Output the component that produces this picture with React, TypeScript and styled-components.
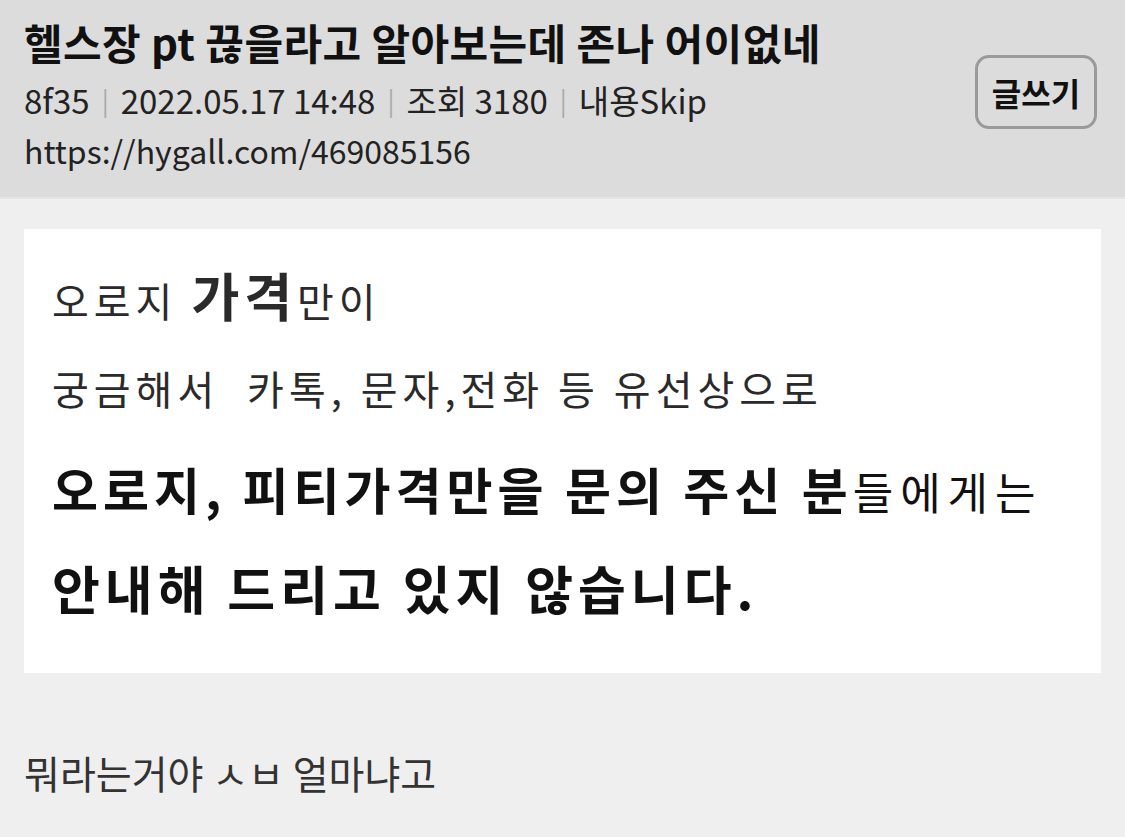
import React from "react";
import styled, { createGlobalStyle } from "styled-components";

const GlobalStyle = createGlobalStyle`
  html, body {
    margin: 0;
    padding: 0;
    background: #efefef;
    font-family: "Noto Sans CJK KR", "Noto Sans", sans-serif;
  }
`;

const Page = styled.div`
  width: 1125px;
  min-height: 837px;
  background: #efefef;
`;

const Header = styled.header`
  display: flex;
  justify-content: space-between;
  align-items: flex-start;
  padding: 14px 28px 27px 24px;
  background: #dcdcdc;
  border-bottom: 2px solid #e4e4e4;
`;

const Info = styled.div`
  display: flex;
  flex-direction: column;
`;

const Title = styled.h1`
  margin: 0;
  font-size: 42px;
  font-weight: 700;
  line-height: 56px;
  color: #111;
  letter-spacing: 0.4px;
  white-space: nowrap;
`;

const Meta = styled.div`
  font-size: 33px;
  line-height: 60px;
  color: #222;
  white-space: nowrap;
`;

const Sep = styled.span`
  display: inline-block;
  margin: 0 12px;
  color: #aaa;
  font-size: 26px;
  vertical-align: 3px;
`;

const Url = styled.div`
  font-size: 32px;
  line-height: 40px;
  color: #222;
`;

const WriteButton = styled.button`
  margin-top: 41px;
  width: 122px;
  height: 74px;
  border: 3px solid #9a9a9a;
  border-radius: 14px;
  background: transparent;
  font-family: inherit;
  font-size: 32px;
  font-weight: 700;
  color: #111;
  cursor: pointer;
`;

const Body = styled.main`
  padding: 30px 24px 0 24px;
`;

const Picture = styled.div`
  background: #fff;
  padding: 24px 28px 45px 28px;
  font-family: "Noto Sans CJK KR", sans-serif;
  color: #1a1a1a;
`;

const Line = styled.div<{ $lh: number; $size: number; $bold?: boolean }>`
  line-height: ${(p) => p.$lh}px;
  font-size: ${(p) => p.$size}px;
  font-weight: ${(p) => (p.$bold ? 700 : 400)};
  letter-spacing: 5px;
  white-space: nowrap;
  color: ${(p) => (p.$bold ? "#111" : "#2a2a2a")};
`;

const Em = styled.span<{ $size: number; $bold?: boolean; $track?: number }>`
  font-size: ${(p) => p.$size}px;
  font-weight: ${(p) => (p.$bold ? 700 : 400)};
  letter-spacing: ${(p) => p.$track ?? 5}px;
  line-height: 1;
`;

const Comment = styled.p`
  margin: 74px 0 0 0;
  font-size: 39px;
  line-height: 50px;
  color: #333;
`;

export default function App() {
  return (
    <Page>
      <GlobalStyle />
      <Header>
        <Info>
          <Title>헬스장 pt 끊을라고 알아보는데 존나 어이없네</Title>
          <Meta>
            8f35<Sep>|</Sep>2022.05.17 14:48<Sep>|</Sep>조회 3180<Sep>|</Sep>내용Skip
          </Meta>
          <Url>https://hygall.com/469085156</Url>
        </Info>
        <WriteButton>글쓰기</WriteButton>
      </Header>
      <Body>
        <Picture>
          <Line $lh={94} $size={40}>
            오로지 <Em $size={52} $bold>가격</Em>만이
          </Line>
          <Line $lh={82} $size={40}>
            궁금해서&nbsp; 카톡, 문자,전화 등 유선상으로
          </Line>
          <Line $lh={118} $size={50} $bold>
            오로지, 피티가격만을 문의 주신 분<Em $size={44} $track={7}>들에게는</Em>
          </Line>
          <Line $lh={81} $size={52} $bold>
            안내해 드리고 있지 않습니다.
          </Line>
        </Picture>
        <Comment>뭐라는거야 ㅅㅂ 얼마냐고</Comment>
      </Body>
    </Page>
  );
}
